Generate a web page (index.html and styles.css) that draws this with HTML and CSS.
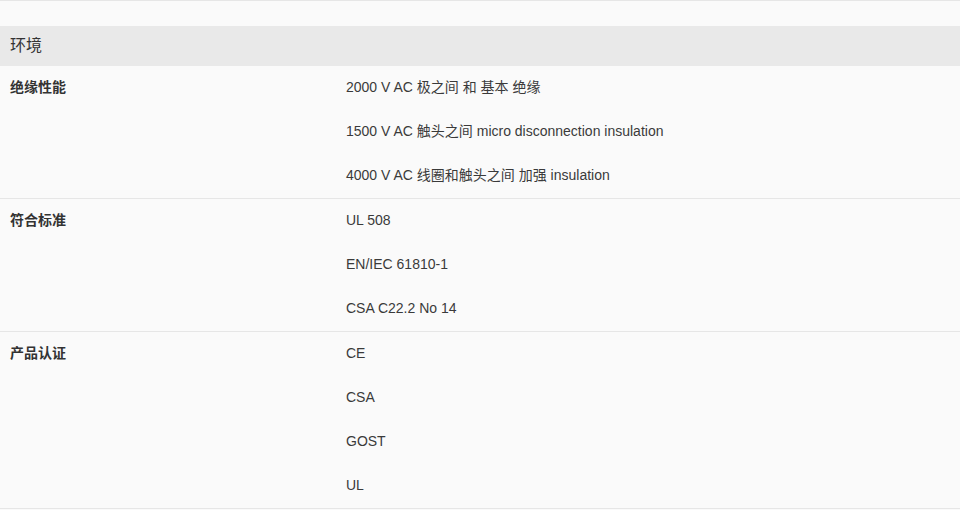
FILE: index.html
```html
<!DOCTYPE html>
<html lang="zh-CN">
<head>
<meta charset="utf-8">
<title>环境</title>
<link rel="stylesheet" href="styles.css">
</head>
<body>
<div class="top"></div>
<section class="spec">
  <h3 class="spec-title">环境</h3>
  <div class="spec-row">
    <div class="spec-label">绝缘性能</div>
    <ul class="spec-values">
      <li>2000 V AC 极之间 和 基本 绝缘</li>
      <li>1500 V AC 触头之间 micro disconnection insulation</li>
      <li>4000 V AC 线圈和触头之间 加强 insulation</li>
    </ul>
  </div>
  <div class="spec-row">
    <div class="spec-label">符合标准</div>
    <ul class="spec-values">
      <li>UL 508</li>
      <li>EN/IEC 61810-1</li>
      <li>CSA C22.2 No 14</li>
    </ul>
  </div>
  <div class="spec-row">
    <div class="spec-label">产品认证</div>
    <ul class="spec-values">
      <li>CE</li>
      <li>CSA</li>
      <li>GOST</li>
      <li>UL</li>
    </ul>
  </div>
</section>
</body>
</html>
```
FILE: styles.css
```css
html, body {
  margin: 0;
  padding: 0;
  background: #fafafa;
}
body {
  font-family: "Liberation Sans", Arial, "Noto Sans CJK SC", sans-serif;
  color: #333333;
  font-size: 14px;
}
.top {
  height: 25px;
  border-top: 1px solid #e6e6e6;
}
.spec-title {
  margin: 0;
  height: 40px;
  line-height: 40px;
  padding-left: 10px;
  background: #e9e9e9;
  font-size: 16px;
  font-weight: normal;
  color: #333333;
}
.spec-row {
  display: grid;
  grid-template-columns: 346px 1fr;
  border-bottom: 1px solid #e6e6e6;
}
.spec-label {
  padding-left: 10px;
  font-weight: bold;
  font-size: 14px;
  line-height: 42px;
}
.spec-values {
  list-style: none;
  margin: 0;
  padding: 0;
}
.spec-values li {
  height: 44px;
  line-height: 42px;
  color: #3a3a3a;
}
```
